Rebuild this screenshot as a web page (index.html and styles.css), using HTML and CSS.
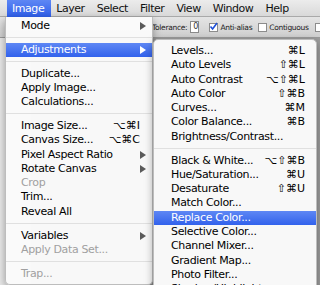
FILE: index.html
```html
<!DOCTYPE html>
<html>

<head>
    <title>Image Menu</title>
    <link rel="stylesheet" href="styles.css">
</head>

<body>
    <div class="screen">
        <div class="menubar">
            <span class="mb-item active">Image</span>
            <span class="mb-item">Layer</span>
            <span class="mb-item">Select</span>
            <span class="mb-item">Filter</span>
            <span class="mb-item">View</span>
            <span class="mb-item">Window</span>
            <span class="mb-item">Help</span>
        </div>

        <div class="optionsbar">
            <span class="opt-label">Tolerance:</span>
            <span class="opt-input">0</span>
            <span class="opt-check checked">
                <svg width="9" height="9" viewBox="0 0 9 9"><path d="M1.5 4.5 L3.6 7 L8 1" fill="none" stroke="#1d4fd8" stroke-width="1.6"/></svg>
            </span>
            <span class="opt-label">Anti-alias</span>
            <span class="opt-check"></span>
            <span class="opt-label">Contiguous</span>
            <span class="opt-check"></span>
        </div>

        <div class="workspace">
            <div class="tools"></div>
            <div class="canvas"></div>
        </div>

        <!-- Image menu -->
        <ul class="menu image-menu">
            <li class="item sub">Mode</li>
            <li class="sep"></li>
            <li class="item sub selected">Adjustments</li>
            <li class="sep"></li>
            <li class="item">Duplicate...</li>
            <li class="item">Apply Image...</li>
            <li class="item">Calculations...</li>
            <li class="sep"></li>
            <li class="item">Image Size...<span class="key">&#x2325;&#x2318;I</span></li>
            <li class="item">Canvas Size...<span class="key">&#x2325;&#x2318;C</span></li>
            <li class="item sub">Pixel Aspect Ratio</li>
            <li class="item sub">Rotate Canvas</li>
            <li class="item disabled">Crop</li>
            <li class="item">Trim...</li>
            <li class="item">Reveal All</li>
            <li class="sep"></li>
            <li class="item sub">Variables</li>
            <li class="item disabled">Apply Data Set...</li>
            <li class="sep"></li>
            <li class="item disabled">Trap...</li>
        </ul>

        <!-- Adjustments submenu -->
        <ul class="menu sub-menu">
            <li class="item">Levels...<span class="key">&#x2318;L</span></li>
            <li class="item">Auto Levels<span class="key">&#x21E7;&#x2318;L</span></li>
            <li class="item">Auto Contrast<span class="key">&#x2325;&#x21E7;&#x2318;L</span></li>
            <li class="item">Auto Color<span class="key">&#x21E7;&#x2318;B</span></li>
            <li class="item">Curves...<span class="key">&#x2318;M</span></li>
            <li class="item">Color Balance...<span class="key">&#x2318;B</span></li>
            <li class="item">Brightness/Contrast...</li>
            <li class="sep"></li>
            <li class="item">Black &amp; White...<span class="key">&#x2325;&#x21E7;&#x2318;B</span></li>
            <li class="item">Hue/Saturation...<span class="key">&#x2318;U</span></li>
            <li class="item">Desaturate<span class="key">&#x21E7;&#x2318;U</span></li>
            <li class="item">Match Color...</li>
            <li class="item selected">Replace Color...</li>
            <li class="item">Selective Color...</li>
            <li class="item">Channel Mixer...</li>
            <li class="item">Gradient Map...</li>
            <li class="item">Photo Filter...</li>
            <li class="item">Shadow/Highlight...</li>
        </ul>
    </div>
</body>

</html>
```

FILE: styles.css
```css
body {
    margin: 0;
    padding: 0;
    font-family: "DejaVu Sans", Verdana, sans-serif;
    background: #9d9d9d;
}

.screen {
    position: relative;
    width: 320px;
    height: 285px;
    overflow: hidden;
    display: flex;
    flex-direction: column;
}

/* top menu bar */
.menubar {
    height: 17px;
    display: flex;
    align-items: center;
    padding-left: 7px;
    background: linear-gradient(#ececec, #d9d9d9);
    border-bottom: 1px solid #a9a9a9;
    box-sizing: border-box;
    white-space: nowrap;
}

.mb-item {
    font-size: 11px;
    letter-spacing: -0.45px;
    line-height: 17px;
    padding: 0 7px 0 5px;
    color: #111;
}

.mb-item.active {
    background: linear-gradient(#5e87f4, #2f5fea);
    color: #fff;
}

/* tool options bar */
.optionsbar {
    height: 21px;
    display: flex;
    align-items: center;
    padding-left: 152px;
    background: linear-gradient(#e4e4e4, #cfcfcf);
    border-bottom: 1px solid #9a9a9a;
    box-sizing: border-box;
    white-space: nowrap;
}

.opt-label {
    font-size: 7.5px;
    letter-spacing: -0.3px;
    color: #222;
}

.opt-input {
    width: 16px;
    height: 10px;
    margin: 0 4px 0 3px;
    background: #fff;
    border: 1px solid #8a8a8a;
    font-size: 8px;
    line-height: 10px;
    padding-left: 2px;
    color: #333;
}

.opt-check {
    flex: none;
    width: 7px;
    height: 7px;
    margin: 0 2px 0 6px;
    background: #fff;
    border: 1px solid #8c8c8c;
    position: relative;
}

.opt-check svg {
    position: absolute;
    left: -1px;
    top: -2px;
}

.workspace {
    flex: 1;
    display: flex;
}

.tools {
    width: 30px;
    background: #e9e9e9;
    border-right: 1px solid #b5b5b5;
}

.canvas {
    flex: 1;
    background: #9d9d9d;
}

/* drop-down menus */
.menu {
    position: absolute;
    list-style: none;
    margin: 0;
    background: rgba(250, 250, 250, 0.98);
    border: 1px solid #bdbdbd;
    box-shadow: 0 3px 8px rgba(0, 0, 0, 0.35);
    box-sizing: border-box;
    font-size: 11px;
    letter-spacing: -0.35px;
    color: #000;
}

.image-menu {
    left: 5px;
    top: 17px;
    width: 148px;
    padding: 2px 0 3px;
    border-top: none;
    border-radius: 0 0 5px 5px;
}

.sub-menu {
    left: 153px;
    top: 39px;
    width: 164px;
    padding: 4px 0;
    border-radius: 5px;
    z-index: 2;
}

.item {
    height: 14.3px;
    line-height: 14.3px;
    display: flex;
    justify-content: space-between;
    white-space: nowrap;
}

.image-menu .item {
    padding: 0 12px 0 15px;
}

.sub-menu .item {
    padding: 0 11px 0 17px;
}

.image-menu .item.sub {
    padding-right: 6px;
}

.item.sub::after {
    content: "";
    align-self: center;
    border-left: 6px solid #5a5a5a;
    border-top: 4px solid transparent;
    border-bottom: 4px solid transparent;
}

.item.selected {
    background: linear-gradient(#5e87f4, #3262ec);
    color: #fff;
}

.item.selected.sub::after {
    border-left-color: #fff;
}

.item.disabled {
    color: #a0a0a0;
}

.key {
    letter-spacing: 0;
}

.sep {
    height: 9.5px;
    position: relative;
}

.sep::before {
    content: "";
    position: absolute;
    left: 0;
    right: 0;
    top: 4px;
    border-top: 1px solid #e0e0e0;
}
```
